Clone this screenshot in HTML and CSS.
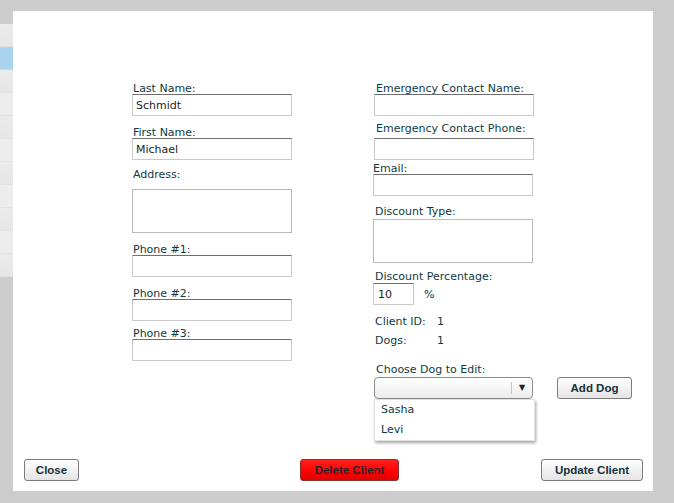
FILE: index.html
```html
<!DOCTYPE html>
<html lang="en">
<head>
  <meta charset="UTF-8">
  <meta name="viewport" content="width=device-width, initial-scale=1.0">
  <title>Edit Client</title>
  <link rel="stylesheet" href="styles.css">
</head>
<body>
  <!-- grid that sits behind the window -->
  <div class="grid-behind">
    <div class="grid-head"></div>
    <div class="grid-row"></div>
    <div class="grid-row selected"></div>
    <div class="grid-row"></div>
    <div class="grid-row alt"></div>
    <div class="grid-row"></div>
    <div class="grid-row alt"></div>
    <div class="grid-row"></div>
    <div class="grid-row alt"></div>
    <div class="grid-row"></div>
    <div class="grid-row alt"></div>
    <div class="grid-row"></div>
  </div>

  <div class="window">
    <div class="form">
      <div class="col">
        <div class="field">
          <label>Last Name:</label>
          <input class="text" type="text" value="Schmidt">
        </div>
        <div class="field first-name">
          <label>First Name:</label>
          <input class="text" type="text" value="Michael">
        </div>
        <div class="field address">
          <label>Address:</label>
          <textarea class="area"></textarea>
        </div>
        <div class="field phone">
          <label>Phone #1:</label>
          <input class="text" type="text">
        </div>
        <div class="field phone">
          <label>Phone #2:</label>
          <input class="text" type="text">
        </div>
        <div class="field phone3">
          <label>Phone #3:</label>
          <input class="text" type="text">
        </div>
      </div>

      <div class="col right">
        <div class="field shifted">
          <label>Emergency Contact Name:</label>
          <input class="text" type="text">
        </div>
        <div class="field shifted ec-phone">
          <label>Emergency Contact Phone:</label>
          <input class="text" type="text">
        </div>
        <div class="field email">
          <label>Email:</label>
          <input class="text" type="text">
        </div>
        <div class="field discount-type">
          <label>Discount Type:</label>
          <textarea class="area"></textarea>
        </div>
        <div class="field discount-pct">
          <label>Discount Percentage:</label>
          <div class="pct-row">
            <input class="text small" type="text" value="10">
            <span class="pct">%</span>
          </div>
        </div>
        <div class="info client-id"><span class="info-key">Client ID:</span><span>1</span></div>
        <div class="info dogs"><span class="info-key">Dogs:</span><span>1</span></div>
        <div class="field choose-dog">
          <label>Choose Dog to Edit:</label>
          <div class="dog-row">
            <div class="combo">
              <div class="combo-value"></div>
              <div class="combo-trigger">&#9660;</div>
              <ul class="combo-list">
                <li>Sasha</li>
                <li>Levi</li>
              </ul>
            </div>
            <button class="btn add-dog">Add Dog</button>
          </div>
        </div>
      </div>
    </div>

    <div class="footer">
      <button class="btn close">Close</button>
      <button class="btn danger">Delete Client</button>
      <button class="btn update">Update Client</button>
    </div>
  </div>
</body>
</html>
```

FILE: styles.css
```css
body {
  margin: 0;
  background: #cccccc;
  font-family: "DejaVu Sans", Verdana, sans-serif;
  font-size: 11px;
  width: 674px;
  height: 503px;
  overflow: hidden;
}
.grid-behind {
  width: 13px;
}
.grid-head {
  height: 24px;
}
.grid-row {
  height: 22px;
  background: linear-gradient(#ebebeb, #e6e6e6);
  border-bottom: 1px solid #e2e2e2;
}
.grid-row.alt {
  background: #ececec;
}
.grid-row.selected {
  background: #a9d3ef;
  border-bottom-color: #c4dcea;
}
.window {
  position: absolute;
  left: 13px;
  top: 11px;
  width: 640px;
  height: 480px;
  background: #fff;
  display: flex;
  flex-direction: column;
}
.form {
  display: grid;
  grid-template-columns: 160px 270px;
  column-gap: 81px;
  padding: 73px 0 0 119px;
}
.field label {
  display: block;
  line-height: 10px;
  height: 10px;
  padding-left: 1px;
  color: #0e3b43;
}
.text {
  display: block;
  box-sizing: border-box;
  width: 160px;
  height: 22px;
  margin: 0;
  padding: 0 3px;
  border: 1px solid #c9c9c9;
  border-top-color: #6e6e6e;
  font: 11px "DejaVu Sans", Verdana, sans-serif;
  color: #1d1d1d;
  background: #fff;
  outline: none;
}
.text.small {
  width: 41px;
  padding-left: 4px;
}
.area {
  display: block;
  box-sizing: border-box;
  width: 160px;
  height: 44px;
  margin: 0;
  border: 1px solid #b9b9b9;
  resize: none;
  background: #fff;
}

/* left column spacing */
.first-name { margin-top: 12px; }
.address { margin-top: 10px; }
.address label { margin-bottom: 9px; }
.phone { margin-top: 12px; }
.phone3 { margin-top: 8px; }

/* right column spacing */
.shifted label { padding-left: 3px; }
.shifted .text { margin-left: 1px; }
.ec-phone { margin-top: 8px; }
.ec-phone label { margin-bottom: 4px; }
.email { margin-top: 4px; }
.email label { margin-bottom: 0; padding-left: 0; }
.discount-type { margin-top: 11px; }
.discount-type label { margin-bottom: 2px; padding-left: 2px; }
.discount-pct { margin-top: 9px; }
.discount-pct label { margin-bottom: 1px; padding-left: 2px; }
.pct-row {
  display: flex;
  align-items: center;
  gap: 10px;
  color: #0e3b43;
}
.info {
  display: flex;
  line-height: 10px;
  height: 10px;
  padding-left: 2px;
  color: #0e3b43;
}
.info-key {
  width: 62px;
}
.client-id { margin-top: 12px; }
.dogs { margin-top: 9px; }
.choose-dog { margin-top: 19px; }
.choose-dog label { margin-bottom: 2px; padding-left: 3px; }

.dog-row {
  display: flex;
  gap: 24px;
  margin-left: 1px;
}
.combo {
  position: relative;
  box-sizing: border-box;
  width: 159px;
  height: 22px;
  display: flex;
  border: 1px solid #8a8a8a;
  border-radius: 4px;
  background: linear-gradient(#ffffff, #ececec);
}
.combo-value {
  flex: 1;
}
.combo-trigger {
  width: 20px;
  margin: 4px 0;
  border-left: 1px solid #c4c4c4;
  font-size: 8px;
  line-height: 12px;
  text-align: center;
  color: #222;
}
.combo-list {
  position: absolute;
  left: -1px;
  top: 21px;
  width: 159px;
  margin: 0;
  padding: 0;
  list-style: none;
  background: #fff;
  border: 1px solid #e2e2e2;
  box-shadow: 1px 2px 3px rgba(0,0,0,0.35);
}
.combo-list li {
  height: 20px;
  line-height: 20px;
  padding-left: 6px;
  color: #0e3b43;
}
.btn {
  box-sizing: border-box;
  height: 22px;
  padding: 0;
  border: 1px solid #7b7b7b;
  border-radius: 3px;
  background: linear-gradient(#ffffff, #e4e4e4);
  font: bold 11.5px "Liberation Sans", Arial, sans-serif;
  color: #16303a;
}
.add-dog { width: 75px; }
.footer {
  margin-top: auto;
  display: flex;
  padding: 0 10px 10px 11px;
}
.close { width: 55px; }
.danger {
  width: 99px;
  margin-left: 221px;
  border-color: #8c2f2f;
  background: linear-gradient(#ff2020, #ff0000 60%, #e00000);
  color: #2a2230;
}
.update {
  width: 102px;
  margin-left: auto;
}
```
